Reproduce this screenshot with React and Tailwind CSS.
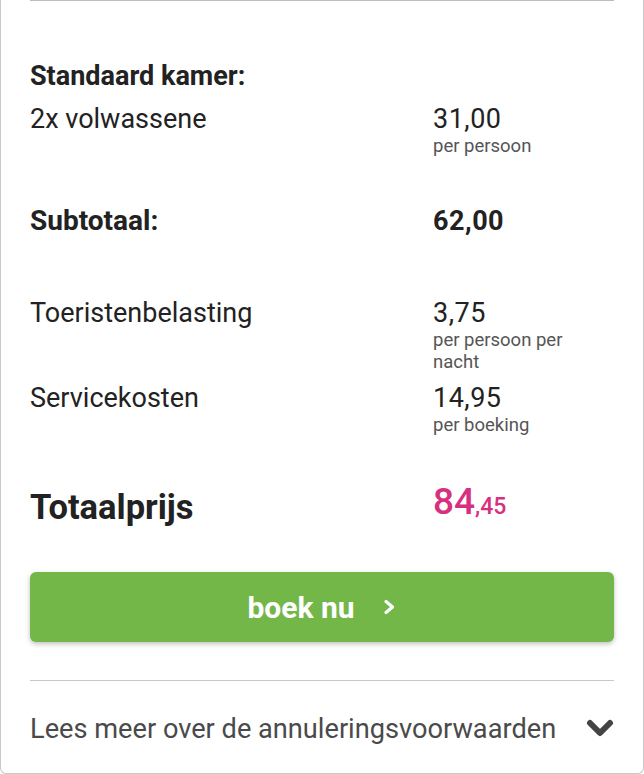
import React from 'react';

const Row = ({ label, value, note, bold, className = '' }) => (
  <div className={`grid grid-cols-[403px_150px] ${className}`}>
    <div className={bold ? 'text-[28px] leading-[30px] font-bold' : 'text-[27px] leading-[30px]'}>{label}</div>
    <div>
      <div className={`text-[27px] leading-[30px] tracking-[0.5px] ${bold ? 'font-bold' : ''}`}>{value}</div>
      {note && <div className="mt-[1px] text-[18.5px] leading-[22px] text-[#555]">{note}</div>}
    </div>
  </div>
);

export default function App() {
  return (
    <div className="w-[644px] h-[774px] bg-white" style={{ fontFamily: 'Roboto, "Open Sans", sans-serif' }}>
      <div className="h-[774px] border-x border-b border-[#c8c8c8] rounded-b-md px-[29px] text-[#222]">
        <div className="border-t border-[#bdbdbd]" />

        <div className="pt-[60px] text-[27px] leading-[30px] font-bold">Standaard kamer:</div>
        <Row className="mt-[13px]" label="2x volwassene" value="31,00" note="per persoon" />

        <Row className="mt-[49px]" bold label="Subtotaal:" value="62,00" />

        <Row className="mt-[62px]" label="Toeristenbelasting" value="3,75" note="per persoon per nacht" />
        <Row className="mt-[10px]" label="Servicekosten" value="14,95" note="per boeking" />

        <div className="grid grid-cols-[403px_1fr] mt-[48px] items-center h-[40px]">
          <div className="text-[34.5px] font-bold leading-[40px]">Totaalprijs</div>
          <div className="text-[#d6317f] font-medium leading-[40px] -mt-[2px]">
            <span className="text-[37px]">84</span>
            <span className="text-[23px]">,45</span>
          </div>
        </div>

        <button className="mt-[48px] w-full h-[70px] rounded-md bg-[#74b749] shadow-[0_2px_5px_rgba(0,0,0,0.25)] flex items-center justify-center gap-[28px] text-white font-bold text-[30px]">
          <span>boek nu</span>
          <svg width="14" height="16" viewBox="0 0 14 16" fill="none">
            <path d="M3 2.5 L9.5 8 L3 13.5" stroke="white" strokeWidth="3.2" strokeLinecap="round" strokeLinejoin="round" />
          </svg>
        </button>

        <div className="mt-[38px] border-t border-[#c8c8c8]" />

        <div className="flex items-center justify-between pt-[33px]">
          <span className="text-[27.2px] leading-[30px] text-[#4a4a4a]">Lees meer over de annuleringsvoorwaarden</span>
          <svg width="28" height="20" viewBox="0 0 28 20" fill="none">
            <path d="M4 4 L14 14 L24 4" stroke="#444" strokeWidth="6" strokeLinecap="round" strokeLinejoin="round" />
          </svg>
        </div>
      </div>
    </div>
  );
}
